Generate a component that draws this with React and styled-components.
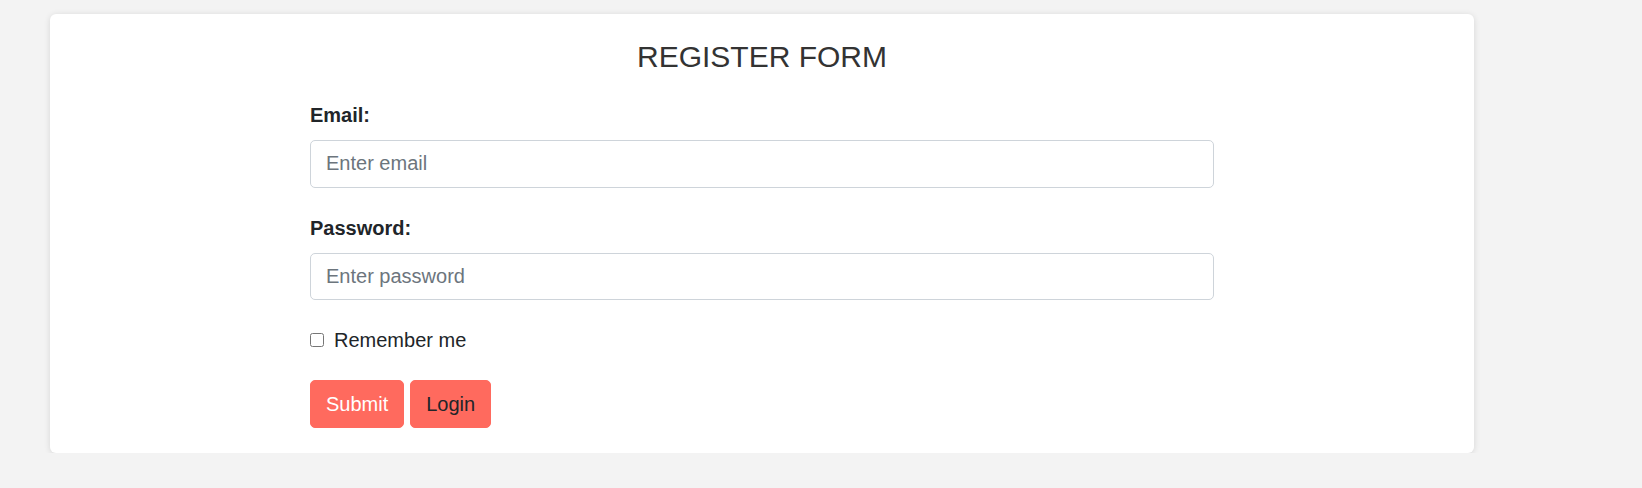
import React from 'react'
import styled, { createGlobalStyle } from 'styled-components'

const GlobalStyle = createGlobalStyle`
  body {
    margin: 0;
    background: #f3f3f3;
    font-family: "Liberation Sans", Arial, sans-serif;
    color: #212529;
  }
`

function App() {
  return (
    <>
      <GlobalStyle />
      <Card>
        <Title>REGISTER FORM</Title>
        <Form onSubmit={e => e.preventDefault()}>
          <Group>
            <Label htmlFor="email">Email:</Label>
            <Input id="email" type="email" placeholder="Enter email" />
          </Group>
          <Group>
            <Label htmlFor="pwd">Password:</Label>
            <Input id="pwd" type="password" placeholder="Enter password" />
          </Group>
          <CheckRow>
            <Check type="checkbox" />
            Remember me
          </CheckRow>
          <Buttons>
            <Button type="submit" light>Submit</Button>
            <Button type="button">Login</Button>
          </Buttons>
        </Form>
      </Card>
    </>
  )
}

export default App

const Card = styled.div`
    margin: 14px 0 0 50px;
    width: 1424px;
    box-sizing: border-box;
    padding: 25px 0;
    background: #FFFFFF;
    border-radius: 6px;
    box-shadow: 0px 1px 6px rgba(0, 0, 0, 0.12);
`

const Title = styled.h2`
    margin: 0 0 25px;
    font-weight: 400;
    font-size: 30px;
    line-height: 36px;
    text-align: center;
    color: #333333;
`

const Form = styled.form`
    width: 904px;
    margin: 0 auto;
`

const Group = styled.div`
    margin-bottom: 25px;
`

const Label = styled.label`
    display: block;
    margin-bottom: 10px;
    font-weight: 700;
    font-size: 20px;
    line-height: 30px;
    color: #212529;
`

const Input = styled.input`
    display: block;
    width: 100%;
    height: 47.5px;
    box-sizing: border-box;
    padding: 7.5px 15px;
    border: 1px solid #ced4da;
    border-radius: 5px;
    font-family: "Liberation Sans", Arial, sans-serif;
    font-size: 20px;
    line-height: 30px;
    color: #495057;
    outline: none;

    &::placeholder {
        color: #6c757d;
    }
`

const CheckRow = styled.label`
    display: flex;
    align-items: center;
    gap: 10px;
    margin-bottom: 25px;
    font-size: 20px;
    line-height: 30px;
    color: #212529;
`

const Check = styled.input`
    width: 14px;
    height: 14px;
    margin: 0;
`

const Buttons = styled.div`
    display: flex;
    gap: 6px;
`

const Button = styled.button`
    height: 47.5px;
    padding: 7.5px 15px;
    border: 1px solid #ff6a5e;
    border-radius: 5px;
    background: #ff6a5e;
    font-family: "Liberation Sans", Arial, sans-serif;
    font-size: 20px;
    line-height: 30px;
    color: ${p => (p.light ? '#FFFFFF' : '#212529')};
    cursor: pointer;
`
